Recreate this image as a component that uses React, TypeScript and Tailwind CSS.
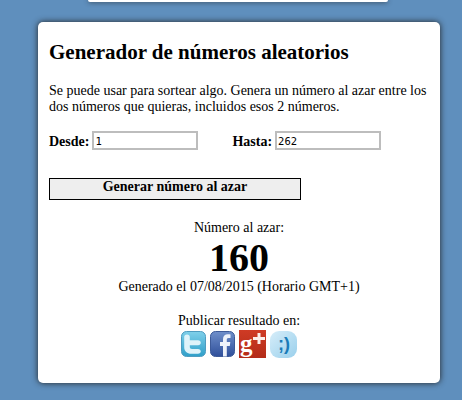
import React from "react";

const serif = "font-['Liberation_Serif','Times_New_Roman',serif]";

function Twitter() {
  return (
    <svg width="25" height="26" viewBox="0 0 25 26" className="block">
      <defs>
        <linearGradient id="tw" x1="0" y1="0" x2="0" y2="1">
          <stop offset="0" stopColor="#7fd0ea" />
          <stop offset="1" stopColor="#2f9fc9" />
        </linearGradient>
      </defs>
      <rect x="0.5" y="0.5" width="24" height="25" rx="5" fill="url(#tw)" stroke="#4f9cc0" />
      <path d="M6 3.500c1.800 0 2.800 1 2.800 2.600v3.200h8.200c1.700 0 2.800 1 2.800 2.500s-1.100 2.500-2.800 2.500H8.800v1.600c0 1.300.8 2 2.200 2h6c1.700 0 2.800 1 2.800 2.400s-1.100 2.500-2.800 2.500h-6.800c-4 0-7-2.500-7-6.500V6.100C3.200 4.500 4.200 3.500 6 3.500z" fill="#dff3fa" />
    </svg>
  );
}

function Facebook() {
  return (
    <svg width="25" height="26" viewBox="0 0 25 26" className="block">
      <defs>
        <linearGradient id="fb" x1="0" y1="0" x2="0" y2="1">
          <stop offset="0" stopColor="#6f8fca" />
          <stop offset="1" stopColor="#2f4f9a" />
        </linearGradient>
      </defs>
      <rect x="0.5" y="0.5" width="24" height="25" rx="5" fill="url(#fb)" stroke="#3d5a98" />
      <path d="M13 25.500V15h-3v-4h3V8.200C13 5 15 3.200 17.800 3.200c1.200 0 2.200.1 2.700.2v3.500h-1.900c-1.500 0-1.800.7-1.800 1.800V11h3.500l-.5 4h-3v10.500z" fill="#eef2fa" />
    </svg>
  );
}

function GooglePlus() {
  return (
    <svg width="27" height="28" viewBox="0 0 27 28" className="block">
      <defs>
        <linearGradient id="gp" x1="0" y1="0" x2="0" y2="1">
          <stop offset="0" stopColor="#cf3b25" />
          <stop offset="1" stopColor="#b32c18" />
        </linearGradient>
      </defs>
      <rect x="0" y="0" width="27" height="28" fill="url(#gp)" />
      <text x="1" y="22" fontFamily="'Liberation Serif', serif" fontWeight="700" fontSize="25" fill="#fff">g</text>
      <path d="M18.500 3h3v4h4.500v3h-4.500v4h-3v-4h-4.500V7h4.500z" fill="#fbeeea" />
    </svg>
  );
}

function Tuenti() {
  return (
    <svg width="27" height="27" viewBox="0 0 27 27" className="block">
      <defs>
        <linearGradient id="tu" x1="0" y1="0" x2="1" y2="1">
          <stop offset="0" stopColor="#d6edf9" />
          <stop offset="1" stopColor="#9ad0ec" />
        </linearGradient>
      </defs>
      <rect x="0" y="0" width="27" height="27" rx="9" fill="url(#tu)" />
      <text x="8" y="19" fontFamily="'Liberation Sans', sans-serif" fontWeight="700" fontSize="18" fill="#1a7bb8">;)</text>
    </svg>
  );
}

export default function App() {
  return (
    <div className={`${serif} w-[462px] h-[400px] overflow-hidden bg-[#5f8fbd] text-[14px] leading-[16px] text-black`}>
      <div className="ml-[88px] w-[300px] h-[2px] rounded-b-[4px] bg-white shadow-[0_0_5px_#222]" />
      <div className="ml-[38px] mt-[20px] w-[402px] h-[361px] rounded-[5px] bg-white pl-[11px] pr-[11px] pt-[19px] shadow-[0_0_6px_#222]">
        <h1 className="text-[21px] leading-[23px] font-bold">Generador de números aleatorios</h1>
        <p className="mt-[19px]">
          Se puede usar para sortear algo. Genera un número al azar entre los dos números que quieras, incluidos esos 2 números.
        </p>
        <div className="mt-[16px] flex items-start h-[20px]">
          <b className="mt-[3px]">Desde:</b>
          <div className="ml-[3px] w-[106px] h-[19px] border-2 border-[#bdbdbd] border-solid pl-[1px] font-['DejaVu_Sans_Mono',monospace] text-[10.5px] leading-[16px]">1</div>
          <b className="ml-[34px] mt-[3px]">Hasta:</b>
          <div className="ml-[3px] w-[106px] h-[19px] border-2 border-[#bdbdbd] border-solid pl-[1px] font-['DejaVu_Sans_Mono',monospace] text-[10.5px] leading-[16px]">262</div>
        </div>
        <div className="mt-[27px] w-[252px] h-[22px] border border-black bg-[#eeeeee] text-center font-bold leading-[15px]">
          Generar número al azar
        </div>
        <div className="mt-[20px] text-center">Número al azar:</div>
        <div className="mt-[2px] text-center text-[40px] leading-[40px] font-bold">160</div>
        <div className="mt-[1px] text-center">Generado el 07/08/2015 (Horario GMT+1)</div>
        <div className="mt-[18px] text-center">Publicar resultado en:</div>
        <div className="mt-[1px] pr-[1px] flex justify-center items-center gap-[4px]">
          <Twitter />
          <Facebook />
          <GooglePlus />
          <Tuenti />
        </div>
      </div>
    </div>
  );
}
